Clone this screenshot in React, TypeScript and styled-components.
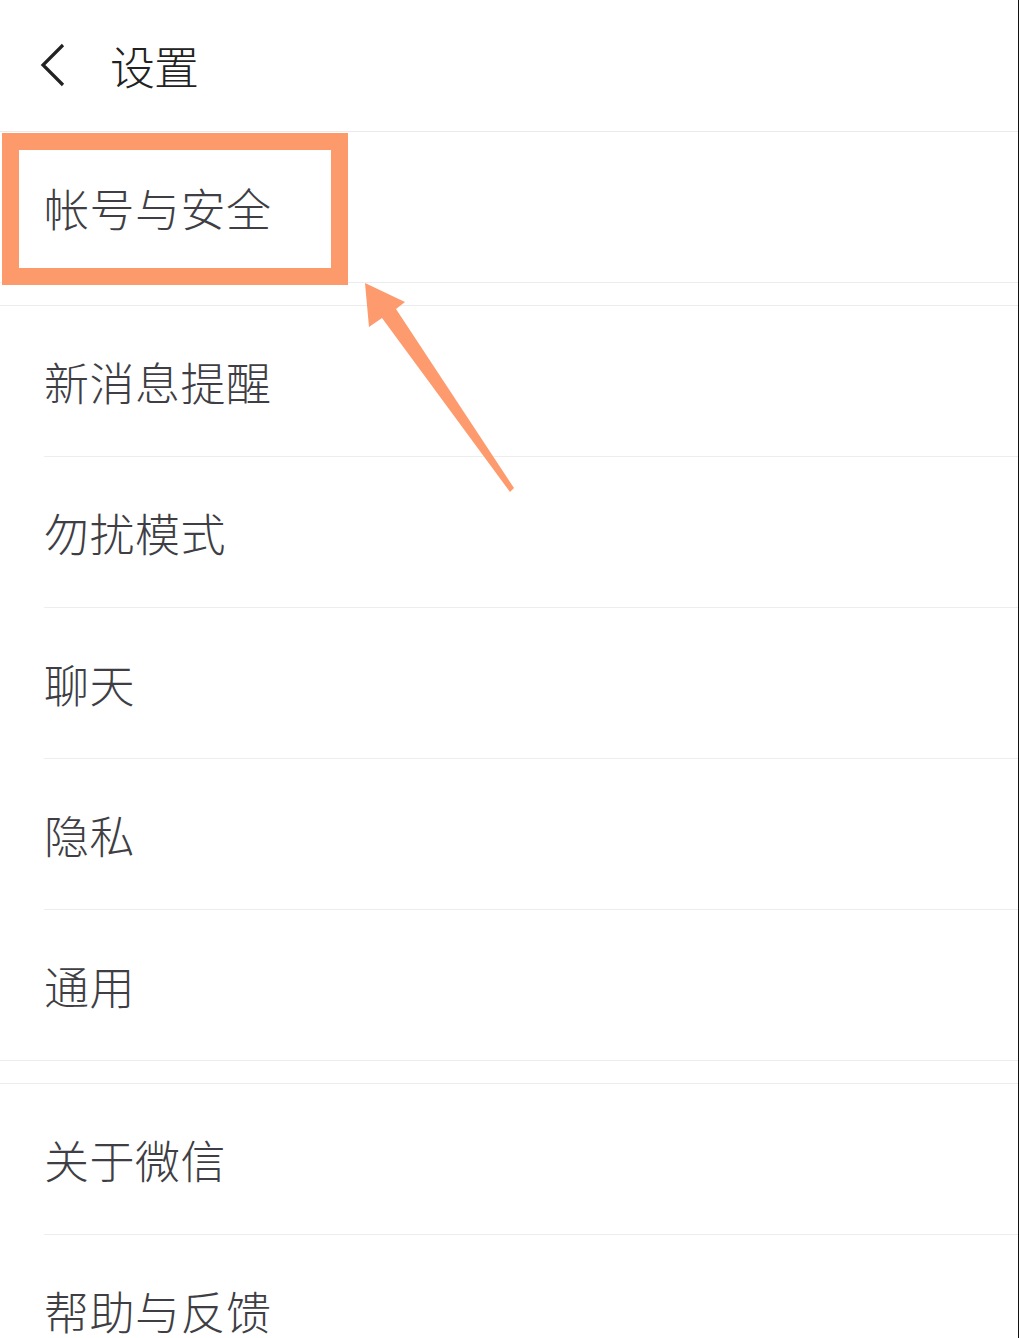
import styled, { createGlobalStyle } from 'styled-components';

const GlobalStyle = createGlobalStyle`
	html, body {
		margin: 0;
		padding: 0;
		background: #ffffff;
	}
	body {
		font-family: 'Noto Sans CJK SC', 'Noto Sans', sans-serif;
	}
`;

const Page = styled.div`
	position: relative;
	width: 1018px;
	height: 1338px;
	overflow: hidden;
	background: #ffffff;
	border-right: 1px solid #111111;
`;

const Header = styled.header`
	height: 132px;
	display: flex;
	align-items: center;
	padding-left: 38px;
	box-sizing: border-box;
	border-bottom: 1px solid #e9e9ee;
`;

const BackButton = styled.button`
	border: 0;
	background: none;
	padding: 0;
	width: 30px;
	height: 46px;
	display: flex;
	align-items: center;
	justify-content: center;
	color: #222222;
	margin-top: -2px;
`;

const Title = styled.h1`
	margin: 0 0 0 42px;
	font-size: 45px;
	font-weight: 300;
	line-height: 1;
	color: #222222;
	letter-spacing: -1px;
`;

const Group = styled.section<{ $top?: boolean }>`
	border-top: ${({ $top }) => ($top ? '1px solid #ececf0' : '0')};
	border-bottom: 1px solid #ececf0;
	margin-bottom: 22px;
`;

const Row = styled.div`
	padding-left: 44px;
`;

const RowInner = styled.div<{ $last?: boolean }>`
	display: flex;
	align-items: center;
	padding-top: 1px;
	box-sizing: border-box;
	border-bottom: ${({ $last }) => ($last ? '0' : '1px solid #ededf0')};
	height: ${({ $last }) => ($last ? '150px' : '151px')};
`;

const Label = styled.span`
	font-size: 45px;
	font-weight: 300;
	line-height: 1;
	color: #3e3e44;
	letter-spacing: 0.5px;
`;

const Highlight = styled.div`
	position: absolute;
	left: 2px;
	top: 133px;
	width: 346px;
	height: 152px;
	box-sizing: border-box;
	border: 17px solid #fd9a6c;
	pointer-events: none;
`;

const Pointer = styled.svg`
	position: absolute;
	left: 0;
	top: 0;
	pointer-events: none;
`;

const groups = [
	['帐号与安全'],
	['新消息提醒', '勿扰模式', '聊天', '隐私', '通用'],
	['关于微信', '帮助与反馈'],
];

export default function App() {
	return (
		<>
			<GlobalStyle />
			<Page>
				<Header>
					<BackButton aria-label="返回">
						<svg width="30" height="46" viewBox="0 0 30 46">
							<path d="M25 3 L5 23 L25 43" fill="none" stroke="currentColor" strokeWidth="3.2" />
						</svg>
					</BackButton>
					<Title>设置</Title>
				</Header>
				{groups.map((items, gi) => (
					<Group key={gi} $top={gi > 0}>
						{items.map((item, i) => (
							<Row key={item}>
								<RowInner $last={i === items.length - 1 && gi < groups.length - 1}>
									<Label>{item}</Label>
								</RowInner>
							</Row>
						))}
					</Group>
				))}
				<Highlight />
				<Pointer width="1018" height="1338" viewBox="0 0 1018 1338">
					<polygon
						points="365,283 405,302 396,309 514,488 510,492 382,318 369,327"
						fill="#fd9b6e"
					/>
				</Pointer>
			</Page>
		</>
	);
}
